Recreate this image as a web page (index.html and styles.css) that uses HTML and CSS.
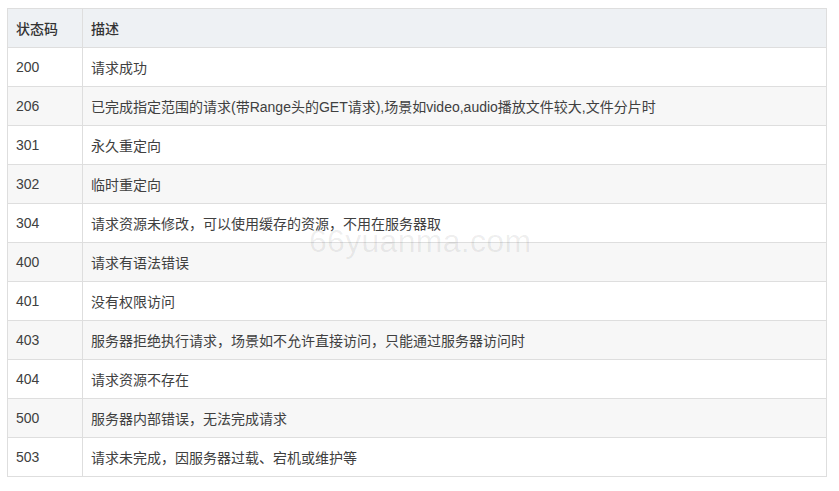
FILE: index.html
```html
<!DOCTYPE html>
<html lang="zh-CN">
<head>
<meta charset="utf-8">
<title>状态码</title>
<link rel="stylesheet" href="styles.css">
</head>
<body>
<div class="wrap">
<table class="codes">
<thead>
<tr><th class="c1">状态码</th><th>描述</th></tr>
</thead>
<tbody>
<tr><td>200</td><td>请求成功</td></tr>
<tr><td>206</td><td>已完成指定范围的请求(带Range头的GET请求),场景如video,audio播放文件较大,文件分片时</td></tr>
<tr><td>301</td><td>永久重定向</td></tr>
<tr><td>302</td><td>临时重定向</td></tr>
<tr><td>304</td><td>请求资源未修改，可以使用缓存的资源，不用在服务器取</td></tr>
<tr><td>400</td><td>请求有语法错误</td></tr>
<tr><td>401</td><td>没有权限访问</td></tr>
<tr><td>403</td><td>服务器拒绝执行请求，场景如不允许直接访问，只能通过服务器访问时</td></tr>
<tr><td>404</td><td>请求资源不存在</td></tr>
<tr><td>500</td><td>服务器内部错误，无法完成请求</td></tr>
<tr><td>503</td><td>请求未完成，因服务器过载、宕机或维护等</td></tr>
</tbody>
</table>
<div class="watermark">66yuanma.com</div>
</div>
</body>
</html>
```
FILE: styles.css
```css
html, body {
  margin: 0;
  padding: 0;
  background: #fff;
}
body {
  font-family: "Liberation Sans", "Noto Sans CJK SC", sans-serif;
  font-size: 14px;
  color: #404040;
}
.wrap {
  position: relative;
  padding: 8px 0 0 7px;
}
.codes {
  border-collapse: collapse;
  width: 820px;
  table-layout: fixed;
}
.codes th, .codes td {
  border: 1px solid #dedede;
  height: 39px;
  padding: 0 0 0 8px;
  text-align: left;
  vertical-align: middle;
  box-sizing: border-box;
  white-space: nowrap;
}
.codes .c1 {
  width: 75px;
}
.codes th {
  background: #eef1f4;
  font-weight: 500;
  color: #333;
}
.codes tbody tr:nth-child(even) td {
  background: #f7f7f7;
}
.watermark {
  position: absolute;
  left: 309px;
  top: 223px;
  font-family: "Liberation Sans", sans-serif;
  font-size: 32px;
  color: rgba(0, 0, 0, 0.07);
  letter-spacing: 0.3px;
  pointer-events: none;
}
```
